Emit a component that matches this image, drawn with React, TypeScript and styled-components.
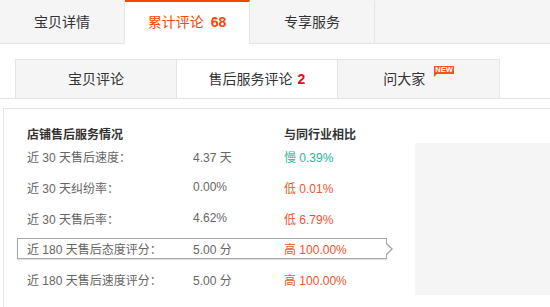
import styled, { createGlobalStyle } from "styled-components";

const GlobalStyle = createGlobalStyle`
  body {
    margin: 0;
    background: #fff;
    font-family: "Liberation Sans", "Noto Sans CJK SC", sans-serif;
    color: #333;
  }
`;

type Trend = "slow" | "low" | "high";

const STATS: { label: string; value: string; trend: Trend; word: string; diff: string }[] = [
  { label: "近 30 天售后速度：", value: "4.37 天", trend: "slow", word: "慢", diff: "0.39%" },
  { label: "近 30 天纠纷率：", value: "0.00%", trend: "low", word: "低", diff: "0.01%" },
  { label: "近 30 天售后率：", value: "4.62%", trend: "low", word: "低", diff: "6.79%" },
  { label: "近 180 天售后态度评分：", value: "5.00 分", trend: "high", word: "高", diff: "100.00%" },
  { label: "近 180 天售后速度评分：", value: "5.00 分", trend: "high", word: "高", diff: "100.00%" },
];

export default function App() {
  return (
    <>
      <GlobalStyle />
      <TopTabs>
        <TopTab>宝贝详情</TopTab>
        <TopTab $active>
          累计评论<Count>68</Count>
        </TopTab>
        <TopTab>专享服务</TopTab>
      </TopTabs>

      <SubTabs>
        <SubTab>宝贝评论</SubTab>
        <SubTab $active>
          售后服务评论<RedCount>2</RedCount>
        </SubTab>
        <SubTab>
          问大家<NewBadge>NEW</NewBadge>
        </SubTab>
      </SubTabs>

      <Panel>
        <Stats>
          <HeadRow>
            <span>店铺售后服务情况</span>
            <span />
            <span>与同行业相比</span>
          </HeadRow>
          {STATS.map((s, i) => (
            <StatRow key={s.label} $selected={i === 3}>
              <span>{s.label}</span>
              <span>{s.value}</span>
              <Compare $trend={s.trend}>
                {s.word} {s.diff}
              </Compare>
            </StatRow>
          ))}
        </Stats>
        <SideBox />
      </Panel>
    </>
  );
}

const TopTabs = styled.div`
  display: flex;
  height: 43px;
  background: #f5f5f5;
  border-bottom: 1px solid #e5e5e5;
`;

const TopTab = styled.div<{ $active?: boolean }>`
  box-sizing: border-box;
  width: 125px;
  height: ${(p) => (p.$active ? "44px" : "43px")};
  display: flex;
  align-items: center;
  justify-content: center;
  border-right: 1px solid #e5e5e5;
  border-top: 2px solid ${(p) => (p.$active ? "#ff4400" : "transparent")};
  background: ${(p) => (p.$active ? "#fff" : "transparent")};
  color: ${(p) => (p.$active ? "#ff4400" : "#333")};
  font-size: 14px;
  line-height: 20px;
  padding-bottom: ${(p) => (p.$active ? "3px" : "2px")};
`;

const Count = styled.b`
  margin-left: 7px;
  font-size: 14px;
`;

const SubTabs = styled.div`
  display: flex;
  margin-top: 15px;
  padding-left: 15px;
  border-bottom: 1px solid #e5e5e5;
`;

const SubTab = styled.div<{ $active?: boolean }>`
  box-sizing: border-box;
  width: 161px;
  height: 39px;
  display: flex;
  align-items: center;
  justify-content: center;
  border-top: 1px solid #e5e5e5;
  border-right: 1px solid #e5e5e5;
  background: ${(p) => (p.$active ? "#fff" : "#f5f5f5")};
  font-size: 14px;
  line-height: 20px;
  color: #333;

  &:first-child {
    border-left: 1px solid #e5e5e5;
    width: 162px;
  }
  &:last-child {
    width: 162px;
  }
`;

const RedCount = styled.b`
  margin-left: 5px;
  color: #e4081d;
`;

const NewBadge = styled.span`
  position: relative;
  top: -9px;
  margin-left: 9px;
  padding: 0 1px;
  height: 8px;
  line-height: 8px;
  font-size: 7.5px;
  font-weight: bold;
  color: #fff;
  background: #f2541b;
  font-family: "Liberation Sans", sans-serif;

  &::after {
    content: "";
    position: absolute;
    left: 0;
    top: 8px;
    border-left: 3px solid #f2541b;
    border-bottom: 3px solid transparent;
  }
`;

const Panel = styled.div`
  display: flex;
  margin: 9px 0 0 3px;
  border-top: 1px solid #e5e5e5;
  border-left: 1px solid #e5e5e5;
  height: 198px;
`;

const Stats = styled.div`
  width: 411px;
  padding: 15px 0 0 13px;
  box-sizing: border-box;
  display: flex;
  flex-direction: column;
  gap: 9.75px;
`;

const columns = `
  display: grid;
  grid-template-columns: 166px 91px 1fr;
  align-items: center;
  padding-left: 10px;
  width: 370px;
  box-sizing: border-box;
`;

const HeadRow = styled.div`
  ${columns}
  height: 18px;
  margin-bottom: -5.75px;
  font-size: 12px;
  font-weight: bold;
  color: #333;
`;

const StatRow = styled.div<{ $selected?: boolean }>`
  ${columns}
  position: relative;
  height: 21px;
  font-size: 12px;
  color: #666;
  border: 1px solid ${(p) => (p.$selected ? "#a8a8a8" : "transparent")};
  box-shadow: ${(p) => (p.$selected ? "0 1px 1px rgba(0,0,0,0.12)" : "none")};
  padding-left: 9px;

  &::before,
  &::after {
    content: "";
    display: ${(p) => (p.$selected ? "block" : "none")};
    position: absolute;
    top: 50%;
    border-style: solid;
    border-color: transparent;
  }
  &::before {
    right: -7px;
    margin-top: -6px;
    border-width: 6px 0 6px 6px;
    border-left-color: #a8a8a8;
  }
  &::after {
    right: -5px;
    margin-top: -5px;
    border-width: 5px 0 5px 5px;
    border-left-color: #fff;
  }
`;

const Compare = styled.span<{ $trend: Trend }>`
  color: ${(p) => (p.$trend === "slow" ? "#2bb39a" : "#f0542c")};
`;

const SideBox = styled.div`
  flex: 1;
  margin-top: 34px;
  height: 152px;
  background: #f5f5f5;
`;
